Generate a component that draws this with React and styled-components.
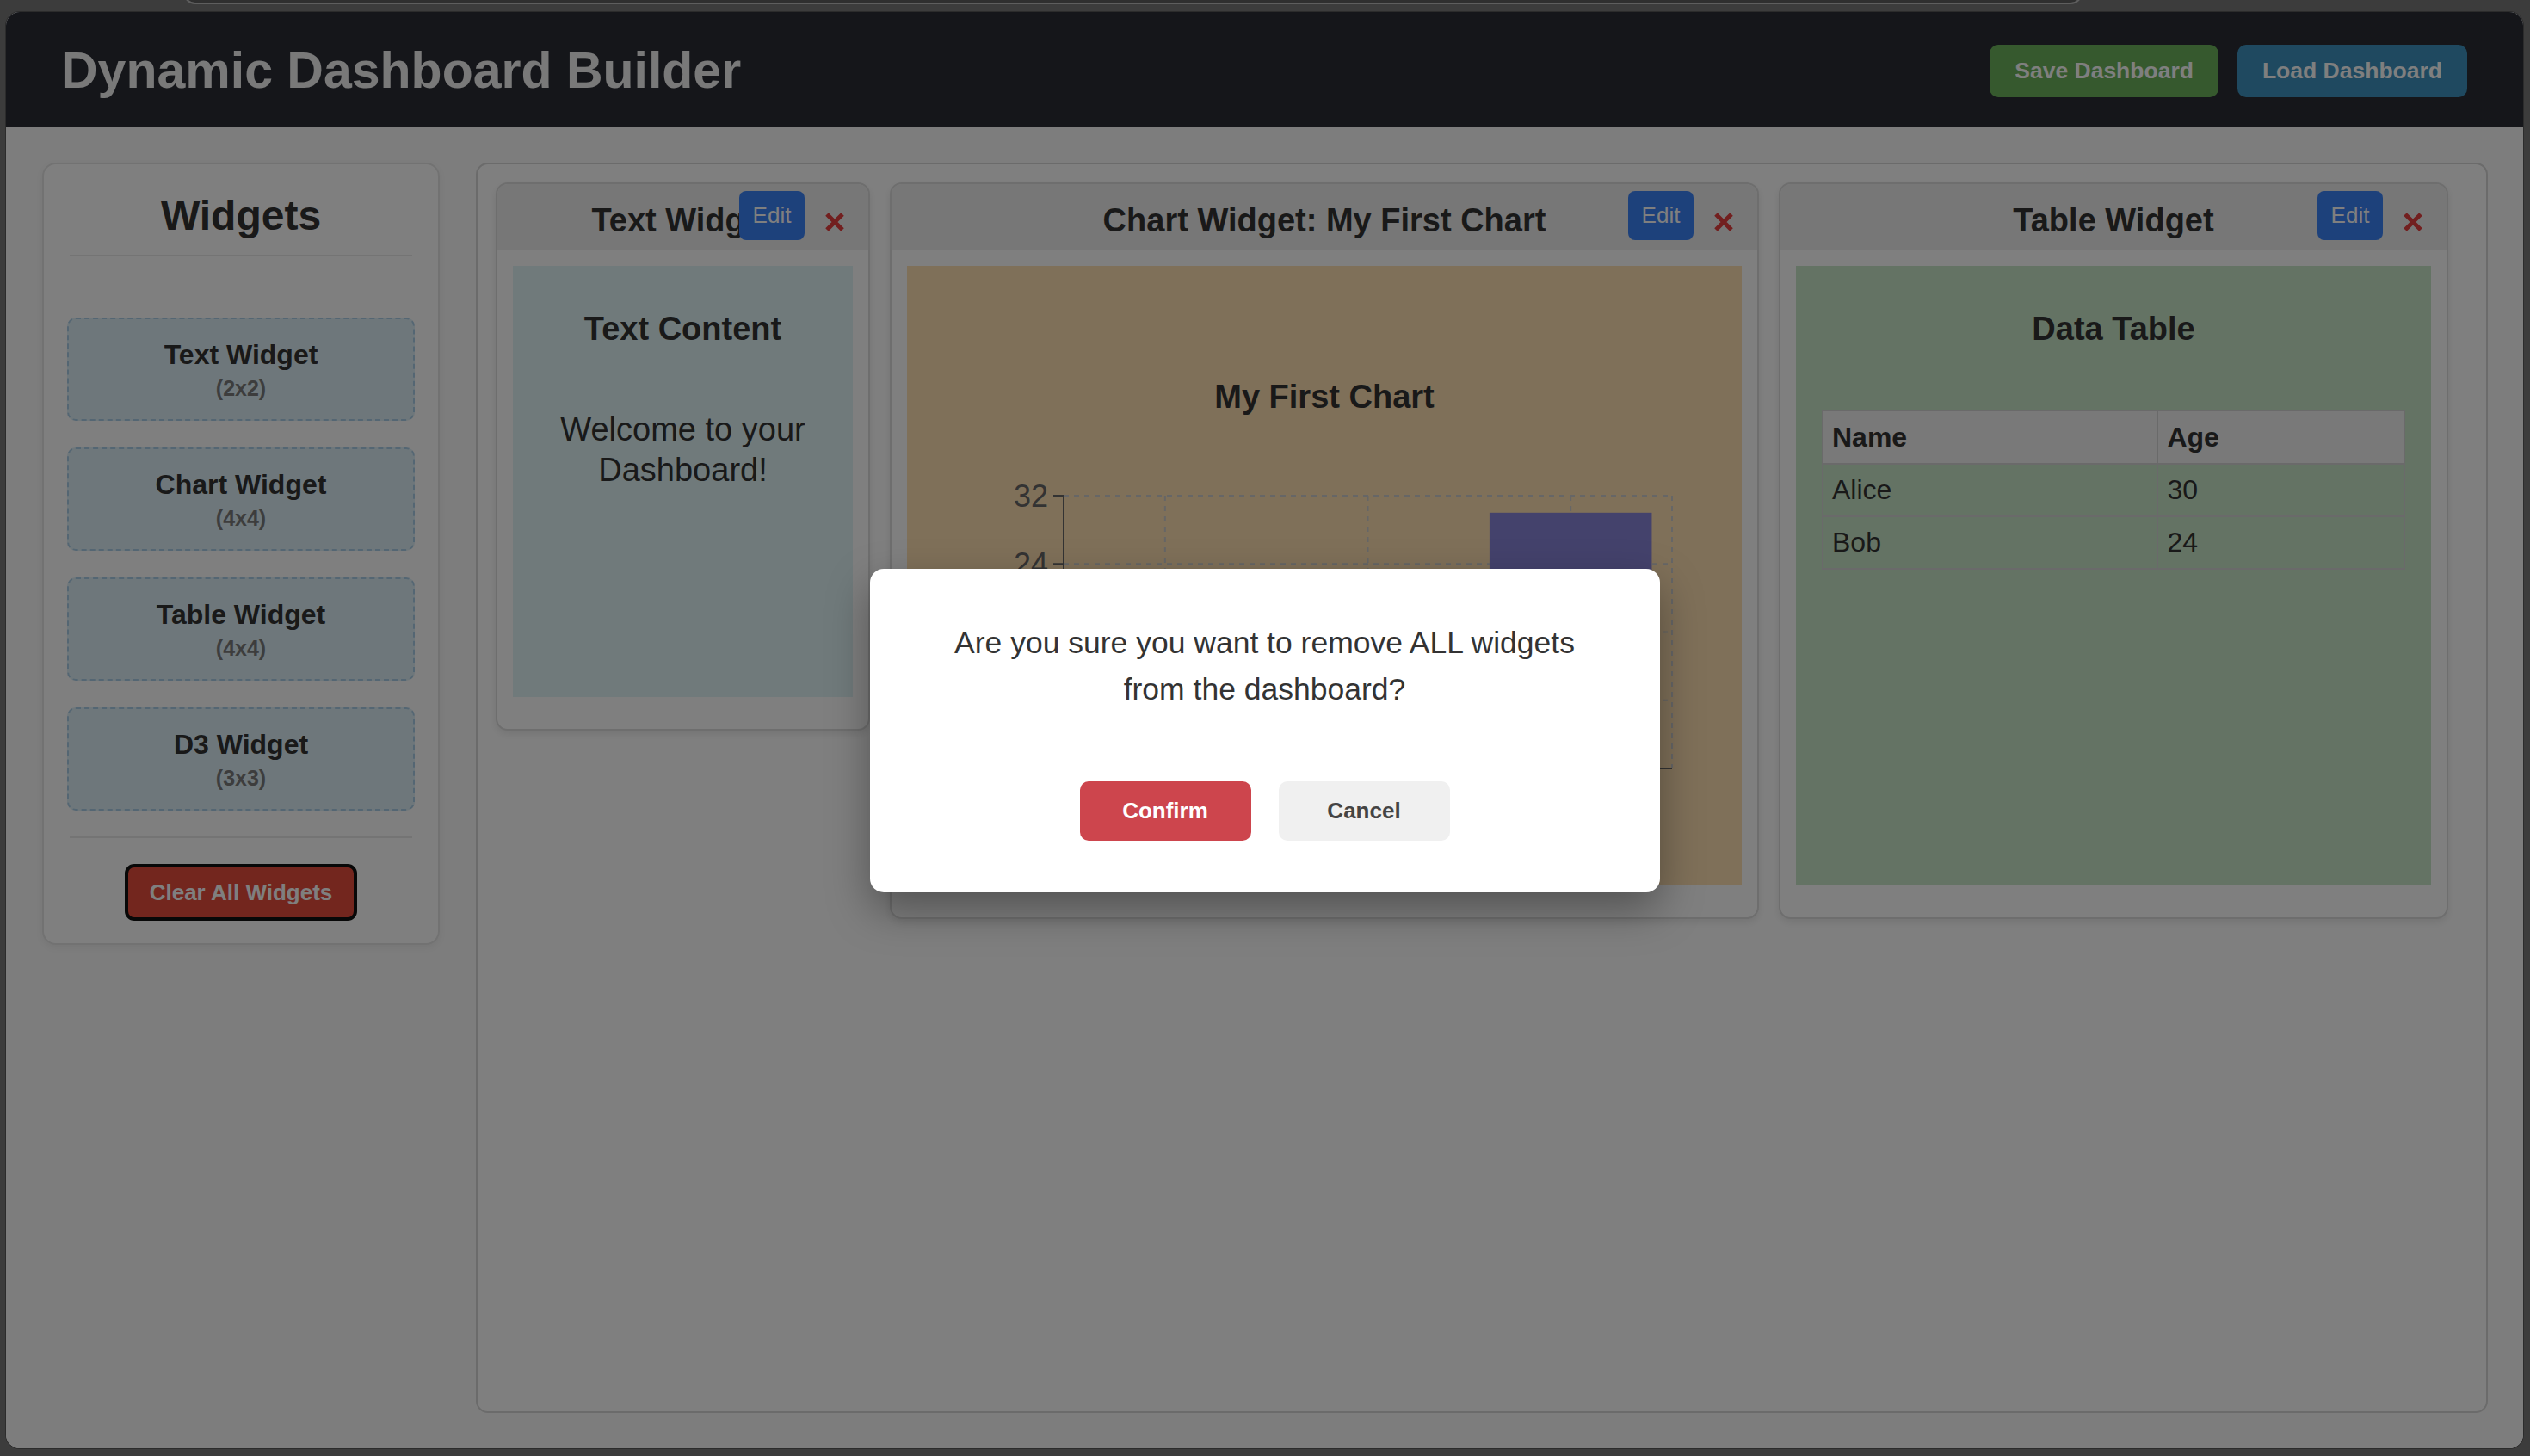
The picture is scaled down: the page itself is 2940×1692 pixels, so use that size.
import React from 'react';
import styled, { createGlobalStyle } from 'styled-components';

const GlobalStyle = createGlobalStyle`
  html, body { margin: 0; padding: 0; }
  body {
    background: #3c3c3c;
    font-family: "Liberation Sans", Arial, Helvetica, sans-serif;
    color: #333;
    width: 2940px;
    height: 1692px;
    overflow: hidden;
  }
  *, *::before, *::after { box-sizing: border-box; }
`;

const Screen = styled.div`
  position: relative;
  width: 2940px;
  height: 1692px;
  padding: 14px 8px 9px 7px;
`;

const Notch = styled.div`
  position: absolute;
  top: -24px;
  left: 213px;
  width: 2207px;
  height: 29px;
  border: 2px solid #5e5e5e;
  border-radius: 14px;
  background: #2f2f2f;
`;

const Page = styled.div`
  position: relative;
  height: 100%;
  border-radius: 16px;
  overflow: hidden;
  background: #fafafa;
  display: flex;
  flex-direction: column;
  box-shadow: 0 0 0 1px #2c2c2c;
`;

const Header = styled.header`
  flex: 0 0 134px;
  background: #2a2c34;
  display: flex;
  align-items: center;
  justify-content: space-between;
  padding: 2px 65px 0 64px;
`;

const Title = styled.h1`
  margin: 0;
  font-size: 59px;
  font-weight: 700;
  color: #f2f2f2;
  line-height: 1;
`;

const HeaderActions = styled.div`
  display: flex;
  gap: 22px;
`;

const HeaderButton = styled.button`
  height: 61px;
  padding: 0 29px;
  border: none;
  border-radius: 10px;
  background: ${(p) => p.$bg};
  color: #fff;
  font-family: inherit;
  font-size: 26.5px;
  font-weight: 700;
`;

const Main = styled.main`
  flex: 1;
  display: flex;
  gap: 42px;
  padding: 41px 41px 41px 42px;
  min-height: 0;
`;

const Sidebar = styled.aside`
  align-self: flex-start;
  width: 462px;
  background: #fff;
  border: 2px solid #e4e4e4;
  border-radius: 16px;
  padding: 30px 27px 26px;
  box-shadow: 0 3px 8px rgba(0, 0, 0, 0.06);
`;

const SidebarTitle = styled.h2`
  margin: 0 3px;
  font-size: 48px;
  line-height: 56px;
  font-weight: 700;
  text-align: center;
  color: #333;
  padding: 2px 0 17px;
  border-bottom: 2px solid #e8e8e8;
`;

const WidgetList = styled.div`
  margin-top: 71px;
  display: flex;
  flex-direction: column;
  gap: 31px;
`;

const WidgetItem = styled.div`
  height: 120px;
  border: 2px dashed #a9cde6;
  border-radius: 10px;
  background: #dceef6;
  display: flex;
  flex-direction: column;
  align-items: center;
  justify-content: center;
  gap: 5px;
`;

const ItemName = styled.div`
  font-size: 32px;
  line-height: 38px;
  font-weight: 700;
  color: #333;
`;

const ItemSize = styled.div`
  font-size: 25px;
  line-height: 30px;
  font-weight: 700;
  color: #7a7a7a;
`;

const SidebarFooter = styled.div`
  margin: 30px 3px 0;
  padding-top: 30px;
  border-top: 2px solid #e8e8e8;
  display: flex;
  justify-content: center;
`;

const ClearButton = styled.button`
  width: 270px;
  height: 66px;
  border: 4px solid #111;
  border-radius: 11px;
  background: #e74c3c;
  color: #fff;
  font-family: inherit;
  font-size: 26px;
  font-weight: 700;
`;

const Dashboard = styled.section`
  flex: 1;
  background: #fff;
  border: 2px solid #d6d6d6;
  border-radius: 14px;
  padding: 21px;
  display: flex;
  align-items: flex-start;
  gap: 23px;
`;

const Card = styled.div`
  width: ${(p) => p.$w}px;
  flex: 0 0 auto;
  background: #fff;
  border: 2px solid #dcdcdc;
  border-radius: 14px;
  overflow: hidden;
  box-shadow: 0 4px 10px rgba(0, 0, 0, 0.09);
`;

const CardHeader = styled.div`
  position: relative;
  height: 77px;
  background: #eeeeee;
  display: flex;
  align-items: center;
  justify-content: center;
  padding-top: 7px;
`;

const CardTitle = styled.h3`
  margin: 0;
  font-size: 38px;
  font-weight: 700;
  color: #333;
  white-space: nowrap;
`;

const CardActions = styled.div`
  position: absolute;
  top: 8px;
  right: 28px;
  display: flex;
  align-items: flex-start;
  gap: 24px;
`;

const EditButton = styled.button`
  width: 76px;
  height: 57px;
  padding: 0;
  border: none;
  border-radius: 8px;
  background: #3b82f6;
  color: #fff;
  font-family: inherit;
  font-size: 26px;
`;

const RemoveButton = styled.button`
  margin-top: 25px;
  width: 22px;
  height: 22px;
  padding: 0;
  border: none;
  background: none;
  display: flex;
`;

const CardBody = styled.div`
  padding: 18px 18px 37px;
`;

const Content = styled.div`
  height: ${(p) => p.$h}px;
  background: ${(p) => p.$bg};
  text-align: center;
  overflow: hidden;
  display: flex;
  flex-direction: column;
  align-items: center;
`;

const ContentHeading = styled.h3`
  margin: ${(p) => p.$top}px 0 0;
  font-size: 38px;
  line-height: 44px;
  font-weight: 700;
  color: #333;
`;

const Paragraph = styled.p`
  margin: 72px 0 0;
  font-size: 38px;
  line-height: 47px;
  color: #333;
  padding: 0 30px;
`;

const ChartSvg = styled.svg`
  margin-top: 57px;
  display: block;
  flex: 0 0 auto;
`;

const DataTable = styled.table`
  margin-top: 72px;
  width: calc(100% - 60px);
  border-collapse: collapse;
  text-align: left;
  font-size: 32px;
  color: #333;
`;

const Th = styled.th`
  height: 62px;
  padding: 0 10px;
  background: #f2f2f2;
  border: 2px solid #d4d4d4;
  font-weight: 700;
  width: ${(p) => p.$w || 'auto'};
`;

const Td = styled.td`
  height: 61px;
  padding: 0 10px;
  border: 2px solid #d4d4d4;
`;

const Overlay = styled.div`
  position: absolute;
  inset: 0;
  background: rgba(0, 0, 0, 0.5);
  display: flex;
  align-items: center;
  justify-content: center;
`;

const Modal = styled.div`
  width: 918px;
  background: #fff;
  border-radius: 16px;
  padding: 59px 60px 60px;
  text-align: center;
  box-shadow: 0 20px 50px rgba(0, 0, 0, 0.35);
`;

const ModalText = styled.p`
  margin: 0 auto;
  max-width: 760px;
  font-size: 35.5px;
  line-height: 54px;
  color: #333;
`;

const ModalActions = styled.div`
  margin-top: 80px;
  display: flex;
  justify-content: center;
  gap: 32px;
`;

const ModalButton = styled.button`
  width: 199px;
  height: 69px;
  border: none;
  border-radius: 10px;
  background: ${(p) => (p.$danger ? '#cd454d' : '#f0f0f0')};
  color: ${(p) => (p.$danger ? '#fff' : '#444')};
  font-family: inherit;
  font-size: 26px;
  font-weight: 700;
`;

const CloseIcon = () => (
  <svg width="22" height="22" viewBox="0 0 22 22">
    <path d="M2 2 L20 20 M20 2 L2 20" stroke="#e53e3e" strokeWidth="5" strokeLinecap="butt" />
  </svg>
);

const WidgetCard = ({ w, title, children }) => (
  <Card $w={w}>
    <CardHeader>
      <CardTitle>{title}</CardTitle>
      <CardActions>
        <EditButton>Edit</EditButton>
        <RemoveButton aria-label="remove">
          <CloseIcon />
        </RemoveButton>
      </CardActions>
    </CardHeader>
    <CardBody>{children}</CardBody>
  </Card>
);

const chartData = [
  { name: 'A', value: 12 },
  { name: 'B', value: 20 },
  { name: 'C', value: 30 },
];

const BarChart = () => {
  const x0 = 180;
  const x1 = 887;
  const yBase = 353;
  const per = 317 / 32;
  const ticks = [0, 8, 16, 24, 32];
  const band = (x1 - x0) / chartData.length;
  const y = (v) => yBase - v * per;
  const centers = chartData.map((_, i) => x0 + band * i + band / 2);
  return (
    <ChartSvg width="967" height="440" viewBox="0 0 967 440">
      <g stroke="#cccccc" strokeWidth="2" strokeDasharray="6 6" fill="none">
        {ticks.map((t) => (
          <line key={`h${t}`} x1={x0} x2={x1} y1={y(t)} y2={y(t)} />
        ))}
        {[x0, ...centers, x1].map((cx, i) => (
          <line key={`v${i}`} x1={cx} x2={cx} y1={y(32)} y2={yBase} />
        ))}
      </g>
      {chartData.map((d, i) => (
        <rect
          key={d.name}
          x={x0 + band * i + band * 0.1}
          y={y(d.value)}
          width={band * 0.8}
          height={yBase - y(d.value)}
          fill="#8884d8"
        />
      ))}
      <g stroke="#666" strokeWidth="2" fill="none">
        <line x1={x0} x2={x0} y1={y(32)} y2={yBase} />
        <line x1={x0} x2={x1} y1={yBase} y2={yBase} />
        {ticks.map((t) => (
          <line key={`t${t}`} x1={x0 - 12} x2={x0} y1={y(t)} y2={y(t)} />
        ))}
        {centers.map((cx, i) => (
          <line key={`xt${i}`} x1={cx} x2={cx} y1={yBase} y2={yBase + 12} />
        ))}
      </g>
      <g fill="#666" fontSize="36" fontFamily="Liberation Sans, Arial, sans-serif">
        {ticks.map((t) => (
          <text key={`l${t}`} x={x0 - 18} y={y(t)} textAnchor="end" dominantBaseline="central">
            {t}
          </text>
        ))}
        {chartData.map((d, i) => (
          <text key={`xl${i}`} x={centers[i]} y={yBase + 44} textAnchor="middle">
            {d.name}
          </text>
        ))}
      </g>
    </ChartSvg>
  );
};

const sidebarWidgets = [
  { name: 'Text Widget', size: '(2x2)' },
  { name: 'Chart Widget', size: '(4x4)' },
  { name: 'Table Widget', size: '(4x4)' },
  { name: 'D3 Widget', size: '(3x3)' },
];

export default function App() {
  return (
    <>
      <GlobalStyle />
      <Screen>
        <Page>
          <Header>
            <Title>Dynamic Dashboard Builder</Title>
            <HeaderActions>
              <HeaderButton $bg="#6db35c">Save Dashboard</HeaderButton>
              <HeaderButton $bg="#3e93c0">Load Dashboard</HeaderButton>
            </HeaderActions>
          </Header>
          <Main>
            <Sidebar>
              <SidebarTitle>Widgets</SidebarTitle>
              <WidgetList>
                {sidebarWidgets.map((w) => (
                  <WidgetItem key={w.name}>
                    <ItemName>{w.name}</ItemName>
                    <ItemSize>{w.size}</ItemSize>
                  </WidgetItem>
                ))}
              </WidgetList>
              <SidebarFooter>
                <ClearButton>Clear All Widgets</ClearButton>
              </SidebarFooter>
            </Sidebar>
            <Dashboard>
              <WidgetCard w={435} title="Text Widget">
                <Content $h={501} $bg="#e1f5f7">
                  <ContentHeading $top={51}>Text Content</ContentHeading>
                  <Paragraph>Welcome to your Dashboard!</Paragraph>
                </Content>
              </WidgetCard>
              <WidgetCard w={1010} title="Chart Widget: My First Chart">
                <Content $h={720} $bg="#ffe0b2">
                  <ContentHeading $top={130}>My First Chart</ContentHeading>
                  <BarChart />
                </Content>
              </WidgetCard>
              <WidgetCard w={778} title="Table Widget">
                <Content $h={720} $bg="#c8e6c9">
                  <ContentHeading $top={51}>Data Table</ContentHeading>
                  <DataTable>
                    <thead>
                      <tr>
                        <Th $w="57.6%">Name</Th>
                        <Th>Age</Th>
                      </tr>
                    </thead>
                    <tbody>
                      <tr>
                        <Td>Alice</Td>
                        <Td>30</Td>
                      </tr>
                      <tr>
                        <Td>Bob</Td>
                        <Td>24</Td>
                      </tr>
                    </tbody>
                  </DataTable>
                </Content>
              </WidgetCard>
            </Dashboard>
          </Main>
          <Overlay>
            <Modal>
              <ModalText>Are you sure you want to remove ALL widgets from the dashboard?</ModalText>
              <ModalActions>
                <ModalButton $danger>Confirm</ModalButton>
                <ModalButton>Cancel</ModalButton>
              </ModalActions>
            </Modal>
          </Overlay>
        </Page>
        <Notch />
      </Screen>
    </>
  );
}
